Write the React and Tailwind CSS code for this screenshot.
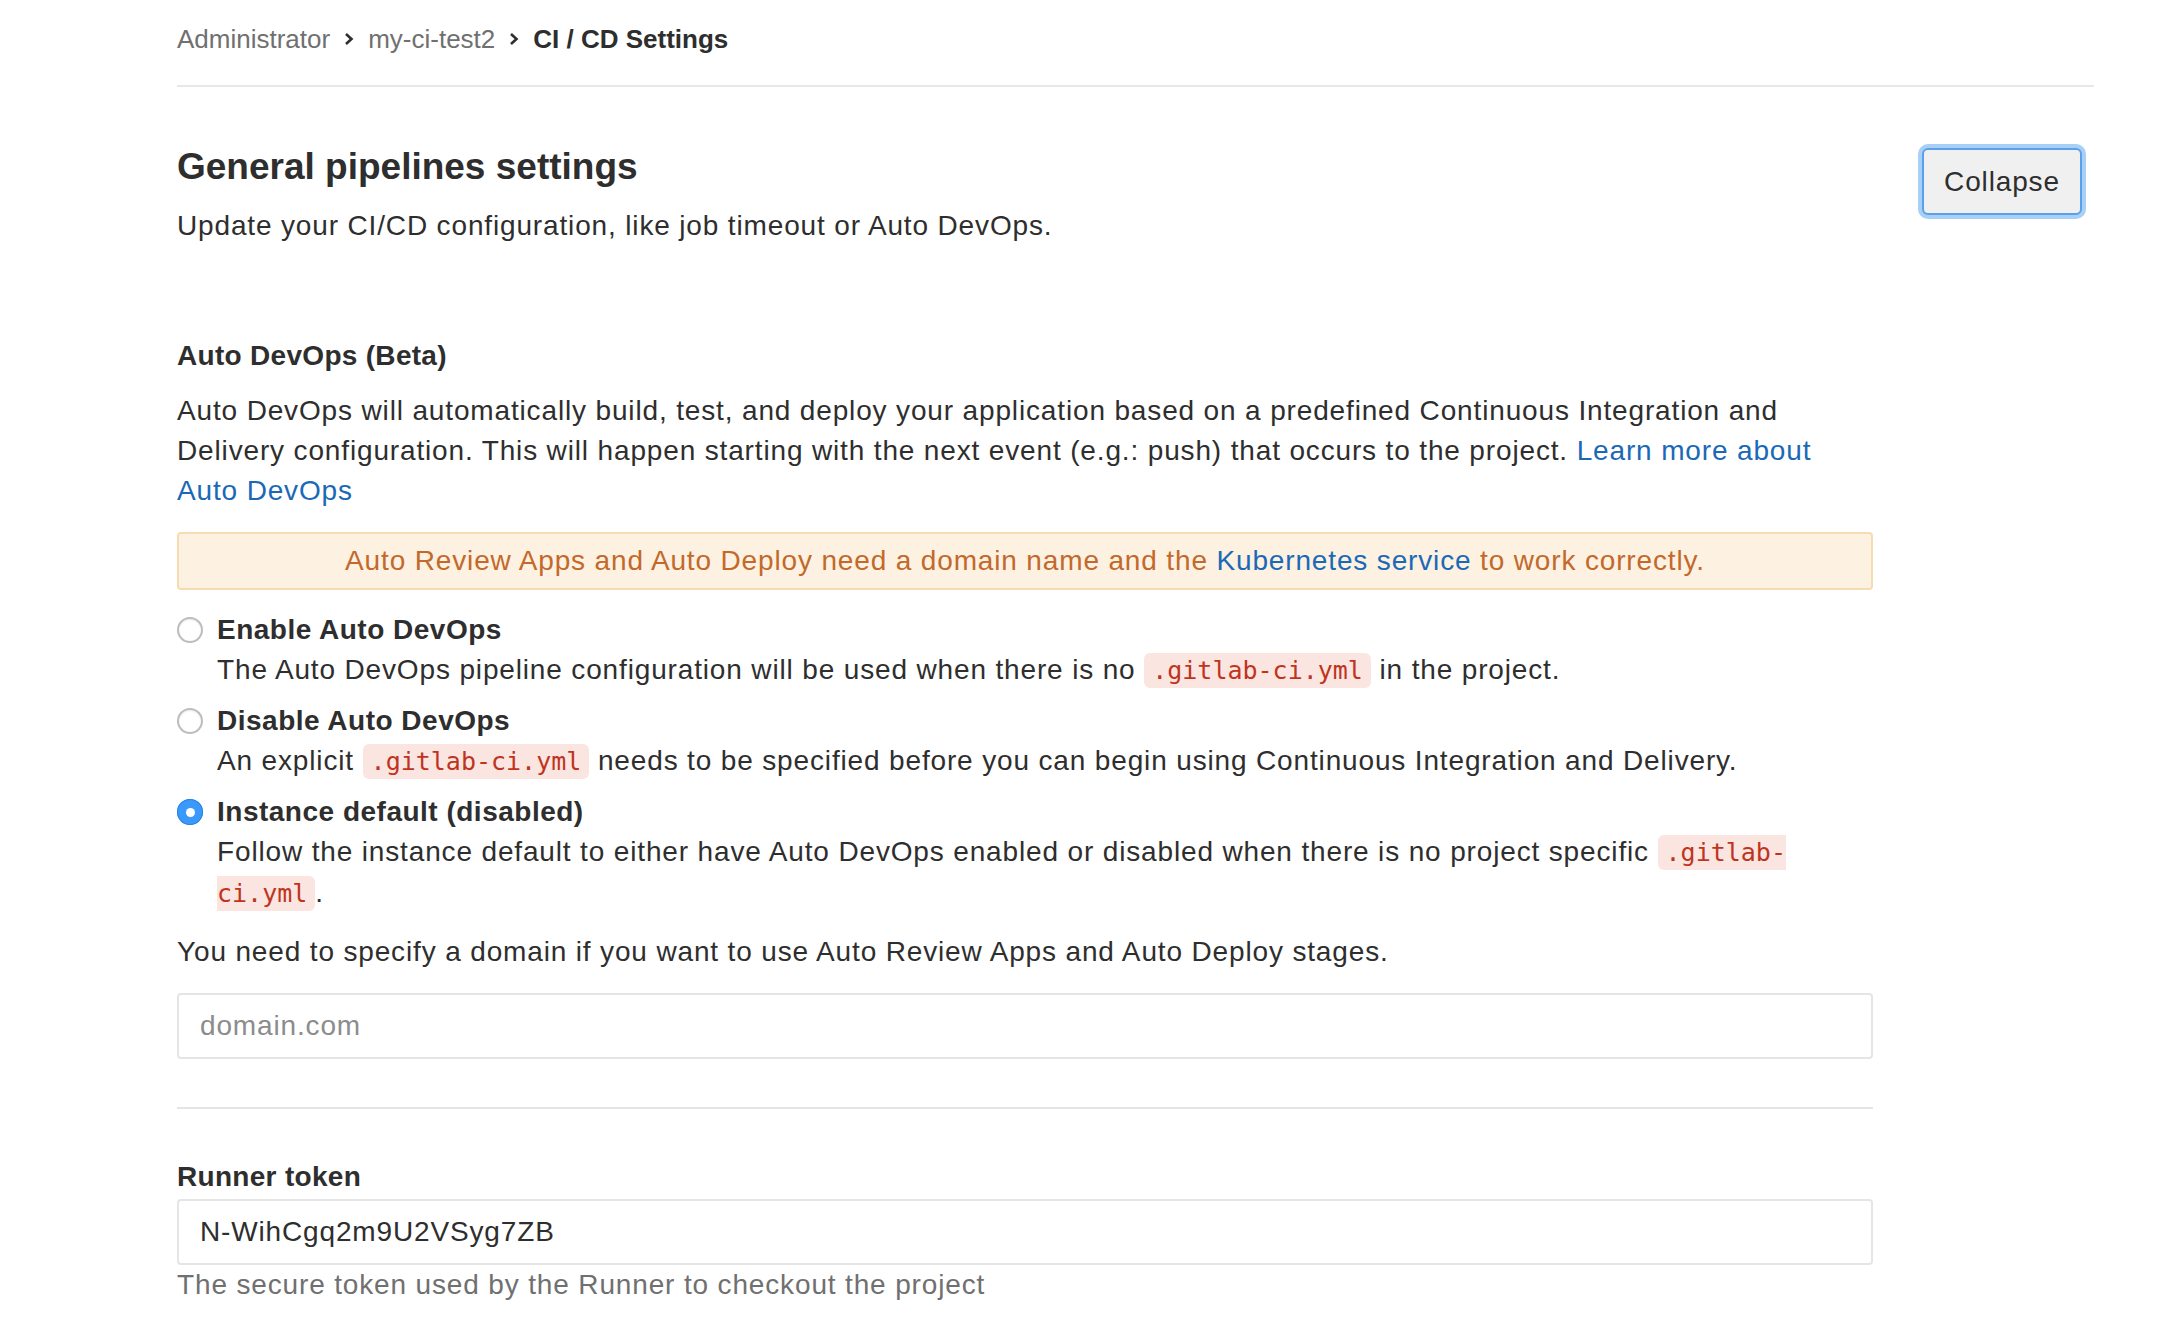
import { useState } from "react";

function Chevron() {
  return (
    <svg width="12" height="16" viewBox="0 0 12 16" className="mx-[13px]">
      <path d="M3 3 L8.5 8 L3 13" fill="none" stroke="#2e2e2e" strokeWidth="2.6" />
    </svg>
  );
}

function Code({ children }) {
  return (
    <code className="rounded-md bg-[#fbe5e1] px-[8px] py-[3px] font-['DejaVu_Sans_Mono',monospace] text-[25px] tracking-normal text-[#c0341d]">
      {children}
    </code>
  );
}

function Radio({ checked, onClick }) {
  return checked ? (
    <span
      onClick={onClick}
      className="mt-[7px] flex h-[26px] w-[26px] shrink-0 items-center justify-center rounded-full bg-[#3b99fc] shadow-[inset_0_0_0_1px_#2a83e4]"
    >
      <span className="h-[9px] w-[9px] rounded-full bg-white" />
    </span>
  ) : (
    <span
      onClick={onClick}
      className="mt-[7px] h-[26px] w-[26px] shrink-0 rounded-full border-2 border-[#bdbdbd] bg-white shadow-[inset_0_1px_2px_rgba(0,0,0,0.08)]"
    />
  );
}

export default function App() {
  const [choice, setChoice] = useState("default");

  const options = [
    {
      id: "enable",
      label: "Enable Auto DevOps",
      desc: (
        <>
          The Auto DevOps pipeline configuration will be used when there is no{" "}
          <Code>.gitlab-ci.yml</Code> in the project.
        </>
      ),
    },
    {
      id: "disable",
      label: "Disable Auto DevOps",
      desc: (
        <>
          An explicit <Code>.gitlab-ci.yml</Code> needs to be specified before you can begin using
          Continuous Integration and Delivery.
        </>
      ),
    },
    {
      id: "default",
      label: "Instance default (disabled)",
      desc: (
        <>
          Follow the instance default to either have Auto DevOps enabled or disabled when there is
          no project specific <Code>.gitlab-ci.yml</Code>.
        </>
      ),
    },
  ];

  return (
    <div className="min-h-screen bg-white font-['Liberation_Sans',Arial,sans-serif] text-[28px] leading-[40px] tracking-[0.85px] text-[#2e2e2e]">
      <div className="pl-[177px] pr-[90px]">
        {/* breadcrumb */}
        <div className="flex h-[87px] items-center border-b-2 border-[#e8e8e8] pb-[8px] text-[26px] leading-[40px] tracking-normal">
          <span className="text-[#707070]">Administrator</span>
          <Chevron />
          <span className="text-[#707070]">my-ci-test2</span>
          <Chevron />
          <span className="font-bold text-[#2e2e2e]">CI / CD Settings</span>
        </div>

        {/* section header */}
        <div className="flex items-start justify-between">
          <div className="pt-[56px]">
            <h4 className="text-[37px] font-bold leading-[48px] tracking-normal">General pipelines settings</h4>
            <p className="mt-[15px]">Update your CI/CD configuration, like job timeout or Auto DevOps.</p>
          </div>
          <button className="mr-[12px] mt-[61px] h-[67px] w-[160px] rounded-md border-2 border-[#5aa0ea] bg-[#f0f0f0] text-[28px] text-[#2e2e2e] ring-4 ring-[#a8cff6]">
            Collapse
          </button>
        </div>

        {/* settings body */}
        <div className="w-[1696px]">
          <h5 className="mt-[90px] font-bold tracking-[0.3px]">Auto DevOps (Beta)</h5>
          <p className="mt-[15px]">
            Auto DevOps will automatically build, test, and deploy your application based on a
            predefined Continuous Integration and Delivery configuration. This will happen starting
            with the next event (e.g.: push) that occurs to the project.{" "}
            <a className="text-[#1b69b6]">Learn more about Auto DevOps</a>
          </p>

          <div className="mt-[21px] flex h-[58px] items-center justify-center rounded border-2 border-[#f6dcb0] bg-[#fdf1e2] text-[#c2692b]">
            <span>
              Auto Review Apps and Auto Deploy need a domain name and the{" "}
              <a className="text-[#1b69b6]">Kubernetes service</a> to work correctly.
            </span>
          </div>

          <div className="mt-[20px] flex flex-col gap-[10px]">
            {options.map((o) => (
              <div key={o.id} className="flex gap-[14px]" onClick={() => setChoice(o.id)}>
                <Radio checked={choice === o.id} />
                <div>
                  <div className="font-bold tracking-[0.5px]">{o.label}</div>
                  <div>{o.desc}</div>
                </div>
              </div>
            ))}
          </div>

          <p className="mt-[18px]">You need to specify a domain if you want to use Auto Review Apps and Auto Deploy stages.</p>
          <input
            placeholder="domain.com"
            className="mt-[21px] h-[66px] w-full rounded border-2 border-[#e5e5e5] px-[21px] text-[28px] text-[#2e2e2e] outline-none placeholder:text-[#8c8c8c]"
          />

          <div className="mt-[48px] border-b-2 border-[#e5e5e5]" />

          <label className="mt-[48px] block font-bold tracking-[0.3px]">Runner token</label>
          <input
            readOnly
            value="N-WihCgq2m9U2VSyg7ZB"
            className="mt-[2px] h-[66px] w-full rounded border-2 border-[#e5e5e5] px-[21px] text-[28px] text-[#2e2e2e] outline-none"
          />
          <p className="text-[#707070]">The secure token used by the Runner to checkout the project</p>
        </div>
      </div>
    </div>
  );
}
